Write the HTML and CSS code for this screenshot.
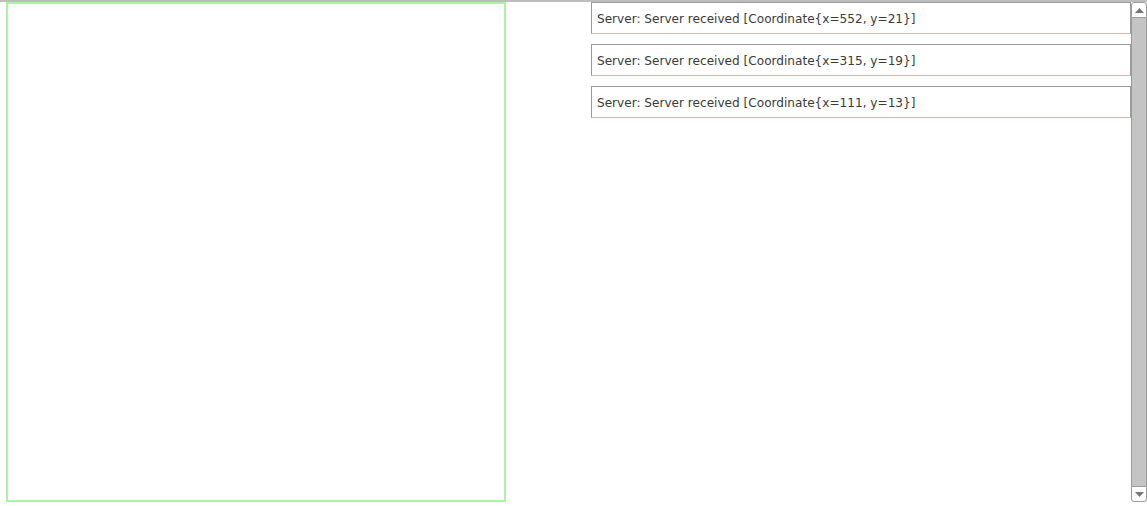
FILE: index.html
```html
<!DOCTYPE html>
<html>
<head>
<meta charset="utf-8">
<link rel="stylesheet" href="styles.css">
</head>
<body>
<div class="frame">
  <div class="canvas-col">
    <div class="canvas"></div>
  </div>
  <div class="messages">
    <div class="msg">Server: Server received [Coordinate{x=552, y=21}]</div>
    <div class="msg">Server: Server received [Coordinate{x=315, y=19}]</div>
    <div class="msg">Server: Server received [Coordinate{x=111, y=13}]</div>
  </div>
  <div class="scrollbar">
    <div class="sb-btn sb-up"><svg width="9" height="5" viewBox="0 0 9 5"><path d="M0 5 L4.5 0 L9 5 Z" fill="#777"/></svg></div>
    <div class="sb-track"></div>
    <div class="sb-btn sb-down"><svg width="9" height="5" viewBox="0 0 9 5"><path d="M0 0 L4.5 5 L9 0 Z" fill="#777"/></svg></div>
  </div>
</div>
</body>
</html>
```
FILE: styles.css
```css
html, body {
  margin: 0;
  padding: 0;
  background: #fff;
  height: 100%;
  overflow: hidden;
}
.frame {
  border-top: 2px solid #bdbdbd;
  display: flex;
  height: 504px;
  box-sizing: border-box;
}
.canvas-col {
  padding-left: 6px;
  width: 591px;
  flex: none;
  box-sizing: border-box;
}
.canvas {
  width: 500px;
  height: 500px;
  box-sizing: border-box;
  border: 2px solid #a8f7a0;
}
.messages {
  width: 540px;
  flex: none;
  display: flex;
  flex-direction: column;
  gap: 10px;
}
.msg {
  height: 32px;
  box-sizing: border-box;
  border: 1px solid #9a9a9a;
  border-bottom-color: #f0a8a8;
  padding: 1px 5px 0;
  font-family: "DejaVu Sans", sans-serif;
  font-size: 12.1px;
  color: #3a3a3a;
  line-height: 30px;
  white-space: nowrap;
}
.scrollbar {
  width: 16px;
  flex: none;
  display: flex;
  flex-direction: column;
  height: 500px;
  box-sizing: border-box;
}
.sb-btn {
  height: 16px;
  box-sizing: border-box;
  border: 1px solid #9a9a9a;
  background: #fff;
  display: flex;
  align-items: center;
  justify-content: center;
}
.sb-up { border-radius: 3px 3px 0 0; }
.sb-down { border-radius: 0 0 3px 3px; }
.sb-track {
  flex: 1;
  background: #c4c4c4;
  border-left: 1px solid #9a9a9a;
  border-right: 1px solid #9a9a9a;
}
```
